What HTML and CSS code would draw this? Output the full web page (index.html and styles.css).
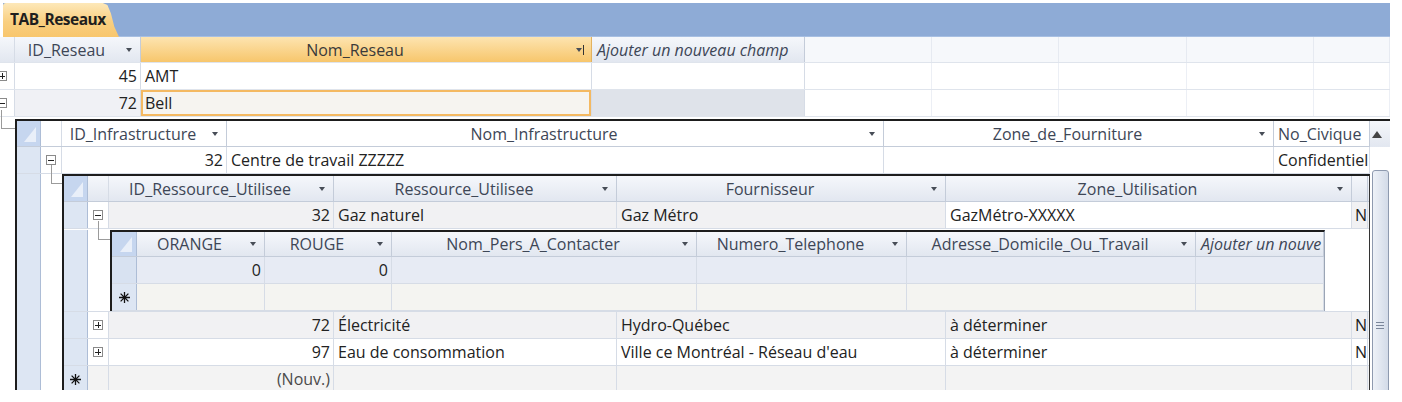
FILE: index.html
```html
<!DOCTYPE html>
<html>
<head>
	<meta charset="utf-8">
	<title>TAB_Reseaux</title>
	<link rel="stylesheet" href="styles.css">
</head>
<body>
<div class="tabbar">
	<div class="tab">TAB_Reseaux</div>
</div>

<div class="view">
<div class="sheet main">
	<div class="row head">
		<div class="cell exp"></div>
		<div class="cell hd w126"><span>ID_Reseau</span><i class="dd"></i></div>
		<div class="cell hd on w451"><span>Nom_Reseau</span><i class="dd bar"></i></div>
		<div class="cell hd add w213">Ajouter un nouveau champ</div>
		<div class="cell blank w127"></div>
		<div class="cell blank w127"></div>
		<div class="cell blank w128"></div>
		<div class="cell blank w127"></div>
		<div class="cell blank fill"></div>
	</div>
	<div class="row">
		<div class="cell exp"><b class="box plus"></b></div>
		<div class="cell num w126">45</div>
		<div class="cell w451">AMT</div>
		<div class="cell w213"></div>
		<div class="cell blank w127"></div>
		<div class="cell blank w127"></div>
		<div class="cell blank w128"></div>
		<div class="cell blank w127"></div>
		<div class="cell blank fill"></div>
	</div>
	<div class="row alt">
		<div class="cell exp"><b class="box"></b></div>
		<div class="cell num w126">72</div>
		<div class="cell current w451">Bell</div>
		<div class="cell grey w213"></div>
		<div class="cell blank w127"></div>
		<div class="cell blank w127"></div>
		<div class="cell blank w128"></div>
		<div class="cell blank w127"></div>
		<div class="cell blank fill"></div>
	</div>

	<!-- sous-feuille : infrastructures -->
	<div class="sub first">
		<div class="gutter w21"><i class="link"></i></div>
		<div class="sheet nest t1">
			<div class="body">
				<div class="row head">
					<div class="cell corner w24"></div>
					<div class="cell exp"></div>
					<div class="cell hd w165"><span>ID_Infrastructure</span><i class="dd"></i></div>
					<div class="cell hd w657"><span>Nom_Infrastructure</span><i class="dd"></i></div>
					<div class="cell hd w390"><span>Zone_de_Fourniture</span><i class="dd"></i></div>
					<div class="cell hd left w96">No_Civique</div>
				</div>
				<div class="row">
					<div class="cell selc w24"></div>
					<div class="cell exp"><b class="box"></b></div>
					<div class="cell num w165">32</div>
					<div class="cell w657">Centre de travail ZZZZZ</div>
					<div class="cell w390"></div>
					<div class="cell w96">Confidentiel</div>
				</div>

				<!-- sous-feuille : ressources -->
				<div class="sub">
					<div class="cell selc w24"></div>
					<div class="gutter w21"><i class="link"></i></div>
					<div class="sheet nest t2">
						<div class="row head">
							<div class="cell corner w24"></div>
							<div class="cell exp w22"></div>
							<div class="cell hd w225"><span>ID_Ressource_Utilisee</span><i class="dd"></i></div>
							<div class="cell hd w283"><span>Ressource_Utilisee</span><i class="dd"></i></div>
							<div class="cell hd w329"><span>Fournisseur</span><i class="dd"></i></div>
							<div class="cell hd w406"><span>Zone_Utilisation</span><i class="dd"></i></div>
							<div class="cell hd w16"></div>
						</div>
						<div class="row shade">
							<div class="cell selc w24"></div>
							<div class="cell exp w22"><b class="box"></b></div>
							<div class="cell num w225">32</div>
							<div class="cell w283">Gaz naturel</div>
							<div class="cell w329">Gaz Métro</div>
							<div class="cell white w406">GazMétro-XXXXX</div>
							<div class="cell edge w16">N</div>
						</div>

						<!-- sous-feuille : contacts -->
						<div class="sub third">
							<div class="cell selc w24"></div>
							<div class="gutter w22"><i class="link"></i></div>
							<div class="sheet nest t3">
								<div class="row head">
									<div class="cell corner w25"></div>
									<div class="cell hd w128"><span>ORANGE</span><i class="dd"></i></div>
									<div class="cell hd w127"><span>ROUGE</span><i class="dd"></i></div>
									<div class="cell hd w305"><span>Nom_Pers_A_Contacter</span><i class="dd"></i></div>
									<div class="cell hd w210"><span>Numero_Telephone</span><i class="dd"></i></div>
									<div class="cell hd w289"><span>Adresse_Domicile_Ou_Travail</span><i class="dd"></i></div>
									<div class="cell hd add w128">Ajouter un nouve</div>
								</div>
								<div class="row now">
									<div class="cell selc now-sel w25"></div>
									<div class="cell num w128">0</div>
									<div class="cell num w127">0</div>
									<div class="cell w305"></div>
									<div class="cell w210"></div>
									<div class="cell w289"></div>
									<div class="cell w128"></div>
								</div>
								<div class="row newrec">
									<div class="cell selc w25"><svg class="star" width="11" height="11" viewBox="0 0 11 11"><path d="M5.5 0v11M0 5.5h11M1.6 1.6l7.8 7.8M9.4 1.6l-7.8 7.8" stroke="#111" stroke-width="1.3"/></svg></div>
									<div class="cell w128"></div>
									<div class="cell w127"></div>
									<div class="cell w305"></div>
									<div class="cell w210"></div>
									<div class="cell w289"></div>
									<div class="cell w128"></div>
								</div>
							</div>
							<div class="rest"></div>
						</div>

						<div class="row shade">
							<div class="cell selc w24"></div>
							<div class="cell exp w22"><b class="box plus"></b></div>
							<div class="cell num w225">72</div>
							<div class="cell w283">Électricité</div>
							<div class="cell w329">Hydro-Québec</div>
							<div class="cell w406">à déterminer</div>
							<div class="cell edge w16">N</div>
						</div>
						<div class="row">
							<div class="cell selc w24"></div>
							<div class="cell exp w22"><b class="box plus"></b></div>
							<div class="cell num w225">97</div>
							<div class="cell w283">Eau de consommation</div>
							<div class="cell w329">Ville ce Montréal - Réseau d'eau</div>
							<div class="cell w406">à déterminer</div>
							<div class="cell edge w16">N</div>
						</div>
						<div class="row newrec2">
							<div class="cell selc w24"><svg class="star" width="11" height="11" viewBox="0 0 11 11"><path d="M5.5 0v11M0 5.5h11M1.6 1.6l7.8 7.8M9.4 1.6l-7.8 7.8" stroke="#111" stroke-width="1.3"/></svg></div>
							<div class="cell exp w22"></div>
							<div class="cell num muted w225">(Nouv.)</div>
							<div class="cell w283"></div>
							<div class="cell w329"></div>
							<div class="cell w406"></div>
							<div class="cell w16"></div>
						</div>
					</div>
				</div>
			</div>
			<div class="vscroll">
				<div class="up"></div>
				<div class="thumb"><i class="grip"></i></div>
			</div>
		</div>
	</div>
</div>
</div>
</body>
</html>
```

FILE: styles.css
```css
*{
	margin: 0;
	padding: 0;
	box-sizing: border-box;
}
body{
	background: #fff;
	font-family: "Open Sans", "Liberation Sans", sans-serif;
	font-size: 16px;
	color: #222;
}

/* barre d'onglet */
.tabbar{
	margin: 3px 12px 0 3px;
	height: 34px;
	background: #8eabd6;
	border-bottom: 1px solid #a7bfe2;
	display: flex;
}
.tab{
	width: 116px;
	height: 34px;
	padding: 0 0 2px 7px;
	line-height: 32px;
	font-weight: bold;
	font-size: 15.5px;
	letter-spacing: -0.5px;
	color: #1e1e1e;
	background: linear-gradient(#fde8b9, #f9cf80 55%, #f8c66d);
	border-top-left-radius: 3px;
	clip-path: polygon(0 0, 86% 0, 90% 6%, 93% 30%, 96% 70%, 100% 100%, 0 100%);
}

/* zone visible de la feuille */
.view{
	width: 1390px;
	height: 353px;
	overflow: hidden;
}
.main{
	margin-left: -6px;
	width: 1396px;
}

.row{
	display: flex;
	height: 27px;
	border-bottom: 1px solid #d6dce6;
}
.row.head{
	height: 26px;
	background: linear-gradient(#f5f7fb, #e2e7f0);
	border-bottom-color: #c4ccd9;
	color: #3d4656;
}
.cell{
	flex: none;
	display: flex;
	align-items: center;
	padding: 0 4px;
	border-right: 1px solid #d6dce6;
	white-space: nowrap;
	overflow: hidden;
}
.num{
	justify-content: flex-end;
	padding-right: 3px;
}
.muted{
	color: #4a4a4a;
}

/* en-tetes */
.hd{
	padding: 0;
	border-right-color: #c4ccd9;
}
.hd span{
	flex: 1;
	text-align: center;
	overflow: hidden;
}
.hd.left{
	padding-left: 4px;
}
.add{
	font-style: italic;
	padding-left: 5px;
	border-right-color: #c4ccd9;
}
.dd{
	flex: none;
	width: 22px;
	display: flex;
	justify-content: center;
	align-items: center;
}
.dd::before{
	content: "";
	border-left: 3.5px solid transparent;
	border-right: 3.5px solid transparent;
	border-top: 4px solid #474d57;
}
.dd.bar::after{
	content: "";
	width: 1px;
	height: 10px;
	margin-left: 1px;
	background: #333;
}
.hd.on{
	background: linear-gradient(#fde4b0, #f7c66c);
	border-right-color: #e3b25f;
	color: #3a3a3a;
}

/* feuille principale */
.blank{
	background: #fff;
	border-right-color: #eceff5;
}
.head .blank{
	background: #f6f8fb;
	border-right-color: #e6eaf1;
}
.main > .row{
	border-bottom-color: #dfe4ec;
}
.main > .row > .exp{
	justify-content: flex-start;
	padding-left: 3px;
}
.main > .sub > .gutter .link{
	margin-left: 7px;
	width: 14px;
}
.alt{
	background: #f0f1f5;
}
.grey{
	background: #dfe3ea;
}
.current{
	background: #f6f4f0;
	box-shadow: inset 0 0 0 2px #f4b962;
}

/* colonnes */
.w16{ width: 16px; }
.w21{ width: 21px; }
.w22{ width: 22px; }
.w24{ width: 24px; }
.w25{ width: 25px; }
.w96{ width: 96px; }
.w126{ width: 126px; }
.w127{ width: 127px; }
.w128{ width: 128px; }
.w165{ width: 165px; }
.w210{ width: 210px; }
.w213{ width: 213px; }
.w225{ width: 225px; }
.w283{ width: 283px; }
.w289{ width: 289px; }
.w305{ width: 305px; }
.w329{ width: 329px; }
.w390{ width: 390px; }
.w406{ width: 406px; }
.w451{ width: 451px; }
.w657{ width: 657px; }
.fill{ flex: 1; }

/* colonne +/- */
.exp{
	width: 21px;
	padding: 0;
	justify-content: center;
	background: #fff;
}
.head .exp{
	background: transparent;
}
.box{
	width: 10px;
	height: 10px;
	border: 1px solid #8a8a8a;
	background: #fff;
	display: flex;
	align-items: center;
	justify-content: center;
}
.box::before{
	content: "";
	width: 6px;
	height: 1px;
	background: #222;
}
.box.plus{
	background: linear-gradient(#222, #222) center / 1px 6px no-repeat, #fff;
}

/* selecteurs */
.selc{
	padding: 0;
	justify-content: center;
	background: #dde6f3;
	border-right-color: #adbdd6;
}
.corner{
	padding: 0 4px 4px 0;
	justify-content: flex-end;
	align-items: flex-end;
	background: #c6d6ef;
	border-right-color: #adbdd6;
}
.corner::after{
	content: "";
	border-left: 12px solid transparent;
	border-bottom: 15px solid #e9eff9;
}

/* sous-feuilles */
.sub{
	display: flex;
}
.sub.first{
	padding-top: 2px;
}
.sub .sub{
	border-bottom: 1px solid #d6dce6;
}
.gutter{
	flex: none;
	background: #fff;
}
.link{
	display: block;
	margin: -9px 0 0 10px;
	width: 12px;
	height: 19px;
	border-left: 1px solid #9b9b9b;
	border-bottom: 1px solid #9b9b9b;
}
.nest{
	border-top: 2px solid #1d1d1d;
	border-left: 2px solid #1d1d1d;
}
.t1{
	display: flex;
	width: 1375px;
}
.t1 .body{
	width: 1353px;
}
.t1 .body > .row{
	background: #fff;
}
.t2{
	width: 1308px;
	border-right: 1px solid #333;
}
.sub.third{
	padding-top: 1px;
	background: #fff;
}
.t3{
	width: 1215px;
	border-right: 1px solid #9ba5b5;
}
.t3 .row.head{
	height: 25px;
}
.rest{
	flex: 1;
	background: #fff;
}
.shade{
	background: #f1f1f3;
}
.white{
	background: #fff;
}
.edge{
	padding: 0 0 0 3px;
	color: #1a1a1a;
}
.now{
	background: #e7ebf4;
}
.now-sel{
	background: #d8e2f1;
}
.newrec{
	background: #f4f4f1;
}
.newrec2{
	background: #f3f3f3;
}
.newrec2 .exp{
	background: #f3f3f3;
}

/* barre de defilement */
.vscroll{
	width: 20px;
	display: flex;
	flex-direction: column;
	align-items: center;
	background: #fff;
}
.up{
	width: 100%;
	height: 26px;
	flex: none;
	display: flex;
	align-items: center;
	justify-content: flex-start;
	padding-left: 2px;
	background: linear-gradient(#f5f7fb, #e2e7f0);
}
.up::before{
	content: "";
	border-left: 5px solid transparent;
	border-right: 5px solid transparent;
	border-bottom: 7px solid #444;
}
.thumb{
	margin-top: 23px;
	width: 17px;
	flex: 1;
	border: 1px solid #8e9aaf;
	border-radius: 3px 3px 0 0;
	background: linear-gradient(90deg, #eef2f8, #d3dbe8);
	display: flex;
	justify-content: center;
	padding-top: 151px;
}
.grip{
	display: block;
	width: 8px;
	height: 7px;
	border-top: 1px solid #7a869a;
	border-bottom: 1px solid #7a869a;
	background: linear-gradient(#7a869a, #7a869a) center / 100% 1px no-repeat;
}
```
